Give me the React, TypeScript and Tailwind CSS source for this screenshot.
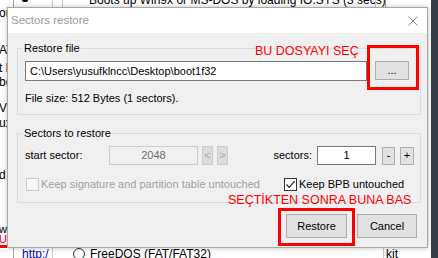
const RedNote = ({ text, className }: { text: string; className: string }) => (
  <span className={`absolute text-[12.5px] leading-[14px] text-[#ff0000] whitespace-nowrap ${className}`}>{text}</span>
);

const WinButton = ({ label, className }: { label: string; className: string }) => (
  <button className={`flex items-center justify-center bg-[#e1e1e1] border border-[#adadad] text-black ${className}`}>
    {label}
  </button>
);

const CheckBox = ({ checked, disabled, label }: { checked?: boolean; disabled?: boolean; label: string }) => (
  <div className="flex items-center">
    <div
      className={`w-[13px] h-[13px] border flex items-center justify-center ${
        disabled ? "border-[#cccccc] bg-[#f7f7f7]" : "border-[#333333] bg-white"
      }`}
    >
      {checked && (
        <svg width="11" height="11" viewBox="0 0 11 11">
          <path d="M1.5 5.5 L4.2 8.3 L9.6 2.2" fill="none" stroke="#222" strokeWidth="1.2" />
        </svg>
      )}
    </div>
    <span className={`ml-[2px] leading-[14px] ${disabled ? "text-[#a0a0a0]" : "text-black"}`}>{label}</span>
  </div>
);

export default function App() {
  return (
    <div className="relative w-[438px] h-[258px] overflow-hidden bg-white flex font-['Liberation_Sans',Arial,sans-serif] text-[11px]">
      {/* background window */}
      <div className="flex-1 flex flex-col">
        {/* top strip */}
        <div className="h-[7px] overflow-hidden flex text-[12px]">
          <div className="w-[13px]" />
          <div className="w-px bg-[#a0a0a0]" />
          <div className="w-[38px] pl-[8px]">
            <div className="w-[6px] h-[2px] bg-black rounded-b" />
          </div>
          <div className="w-px bg-[#c8c8c8]" />
          <div className="w-[9px]" />
          <div className="w-px bg-[#c8c8c8]" />
          <div className="w-[312px] pl-[26px] -mt-[6px] leading-[12px] whitespace-nowrap">
            Boots up Win9x or MS-DOS by loading IO.SYS (3 secs)
          </div>
          <div className="w-px bg-[#c8c8c8]" />
          <div className="w-[9px]" />
          <div className="w-px bg-[#9a9a9a]" />
        </div>

        {/* left fragments */}
        <div className="flex-1 flex flex-col text-[12px] leading-[12px] -ml-px">
          <span>or</span>
          <span className="mt-[25px]">AT</span>
          <span className="mt-[6px]">t l</span>
          <span className="mt-[2px]">bo</span>
          <span className="mt-[14px]">VM</span>
          <span className="mt-[3px]">ux</span>
          <span className="mt-[40px]">d l</span>
          <span className="mt-[43px] text-[11px] leading-[10px]">wn</span>
          <span className="text-[11px] leading-[10px] text-[#ff0000]">UF</span>
          <div className="mt-auto h-[3px] w-[8px] bg-[#ff0000]" />
        </div>

        {/* bottom strip */}
        <div className="h-[10px] flex text-[12px] leading-[12px] overflow-hidden">
          <div className="w-[13px]" />
          <div className="w-px bg-[#a0a0a0]" />
          <div className="w-[38px] pl-[8px] text-[#0000cc]">http:/</div>
          <div className="w-px bg-[#c8c8c8]" />
          <div className="w-[330px] flex items-start pl-[20px]">
            <div className="w-[12px] h-[12px] rounded-full border border-[#333] bg-white" />
            <span className="ml-[5px]">FreeDOS (FAT/FAT32)</span>
          </div>
          <div className="w-px bg-[#c8c8c8]" />
          <span className="pl-[2px]">kit</span>
        </div>
      </div>
      <div className="w-[7px] bg-[#373c46]" />

      {/* dialog */}
      <div className="absolute left-[7px] top-[7px] w-[421px] h-[241px] border border-[#a8a8a8] bg-[#f0f0f0] shadow-[0_0_5px_rgba(0,0,0,0.25)] flex flex-col">
        <div className="h-[25px] bg-white flex items-center justify-between pl-[3px] pr-[9px] text-[11.5px] text-[#999999]">
          <span>Sectors restore</span>
          <svg width="10" height="10" viewBox="0 0 10 10">
            <path d="M0.5 0.5 L9.5 9.5 M9.5 0.5 L0.5 9.5" stroke="#8a8a8a" strokeWidth="1" />
          </svg>
        </div>

        {/* Restore file group */}
        <div className="relative mt-[15px] ml-[9px] mr-[6px] h-[67px] border border-[#dcdcdc]">
          <span className="absolute -top-[8px] left-[5px] px-[1px] bg-[#f0f0f0] leading-[14px]">Restore file</span>
          <div className="flex mt-[12px] pl-[7px] pr-[11px]">
            <div className="flex-1 h-[20px] bg-white border border-[#7a7a7a] pl-[4px] flex items-center">
              C:\Users\yusufklncc\Desktop\boot1f32
            </div>
            <WinButton label="..." className="ml-[8px] w-[34px] h-[19px]" />
          </div>
          <div className="mt-[10px] pl-[7px] leading-[14px]">File size: 512 Bytes (1 sectors).</div>
        </div>

        {/* Sectors to restore group */}
        <div className="relative mt-[18px] ml-[9px] mr-[6px] h-[70px] border border-[#dcdcdc]">
          <span className="absolute -top-[8px] left-[5px] px-[1px] bg-[#f0f0f0] leading-[14px]">Sectors to restore</span>
          <div className="flex items-center mt-[12px] pl-[7px] pr-[6px]">
            <span className="w-[84px]">start sector:</span>
            <div className="w-[89px] h-[19px] border border-[#cccccc] bg-[#f0f0f0] text-[#6d6d6d] flex items-center justify-center">
              2048
            </div>
            <div className="ml-[4px] w-[11px] h-[19px] border border-[#cccccc] bg-[#dcdcdc] text-[#a8a8a8] flex items-center justify-center">
              &lt;
            </div>
            <div className="ml-[4px] w-[11px] h-[19px] border border-[#cccccc] bg-[#dcdcdc] text-[#a8a8a8] flex items-center justify-center">
              &gt;
            </div>
            <span className="ml-auto">sectors:</span>
            <div className="ml-[5px] w-[59px] h-[19px] border border-[#7a7a7a] bg-white flex items-center justify-center">1</div>
            <WinButton label="-" className="ml-[6px] w-[13px] h-[18px]" />
            <WinButton label="+" className="ml-[5px] w-[14px] h-[18px]" />
          </div>
          <div className="flex mt-[12px] pl-[8px]">
            <div className="w-[258px]">
              <CheckBox disabled label="Keep signature and partition table untouched" />
            </div>
            <CheckBox checked label="Keep BPB untouched" />
          </div>
        </div>

        <div className="flex justify-end gap-[10px] mt-[11px] pr-[10px]">
          <WinButton label="Restore" className="w-[61px] h-[24px]" />
          <WinButton label="Cancel" className="w-[60px] h-[24px]" />
        </div>

        {/* red annotations */}
        <RedNote text="BU DOSYAYI SEÇ" className="left-[247px] top-[36px]" />
        <div className="absolute left-[359px] top-[37px] w-[52px] h-[45px] border-[3px] border-[#ff0000]" />
        <RedNote text="SEÇTİKTEN SONRA BUNA BAS" className="left-[220px] top-[185px]" />
        <div className="absolute left-[270px] top-[200px] w-[77px] h-[38px] border-[3px] border-[#ff0000]" />
      </div>
    </div>
  );
}
